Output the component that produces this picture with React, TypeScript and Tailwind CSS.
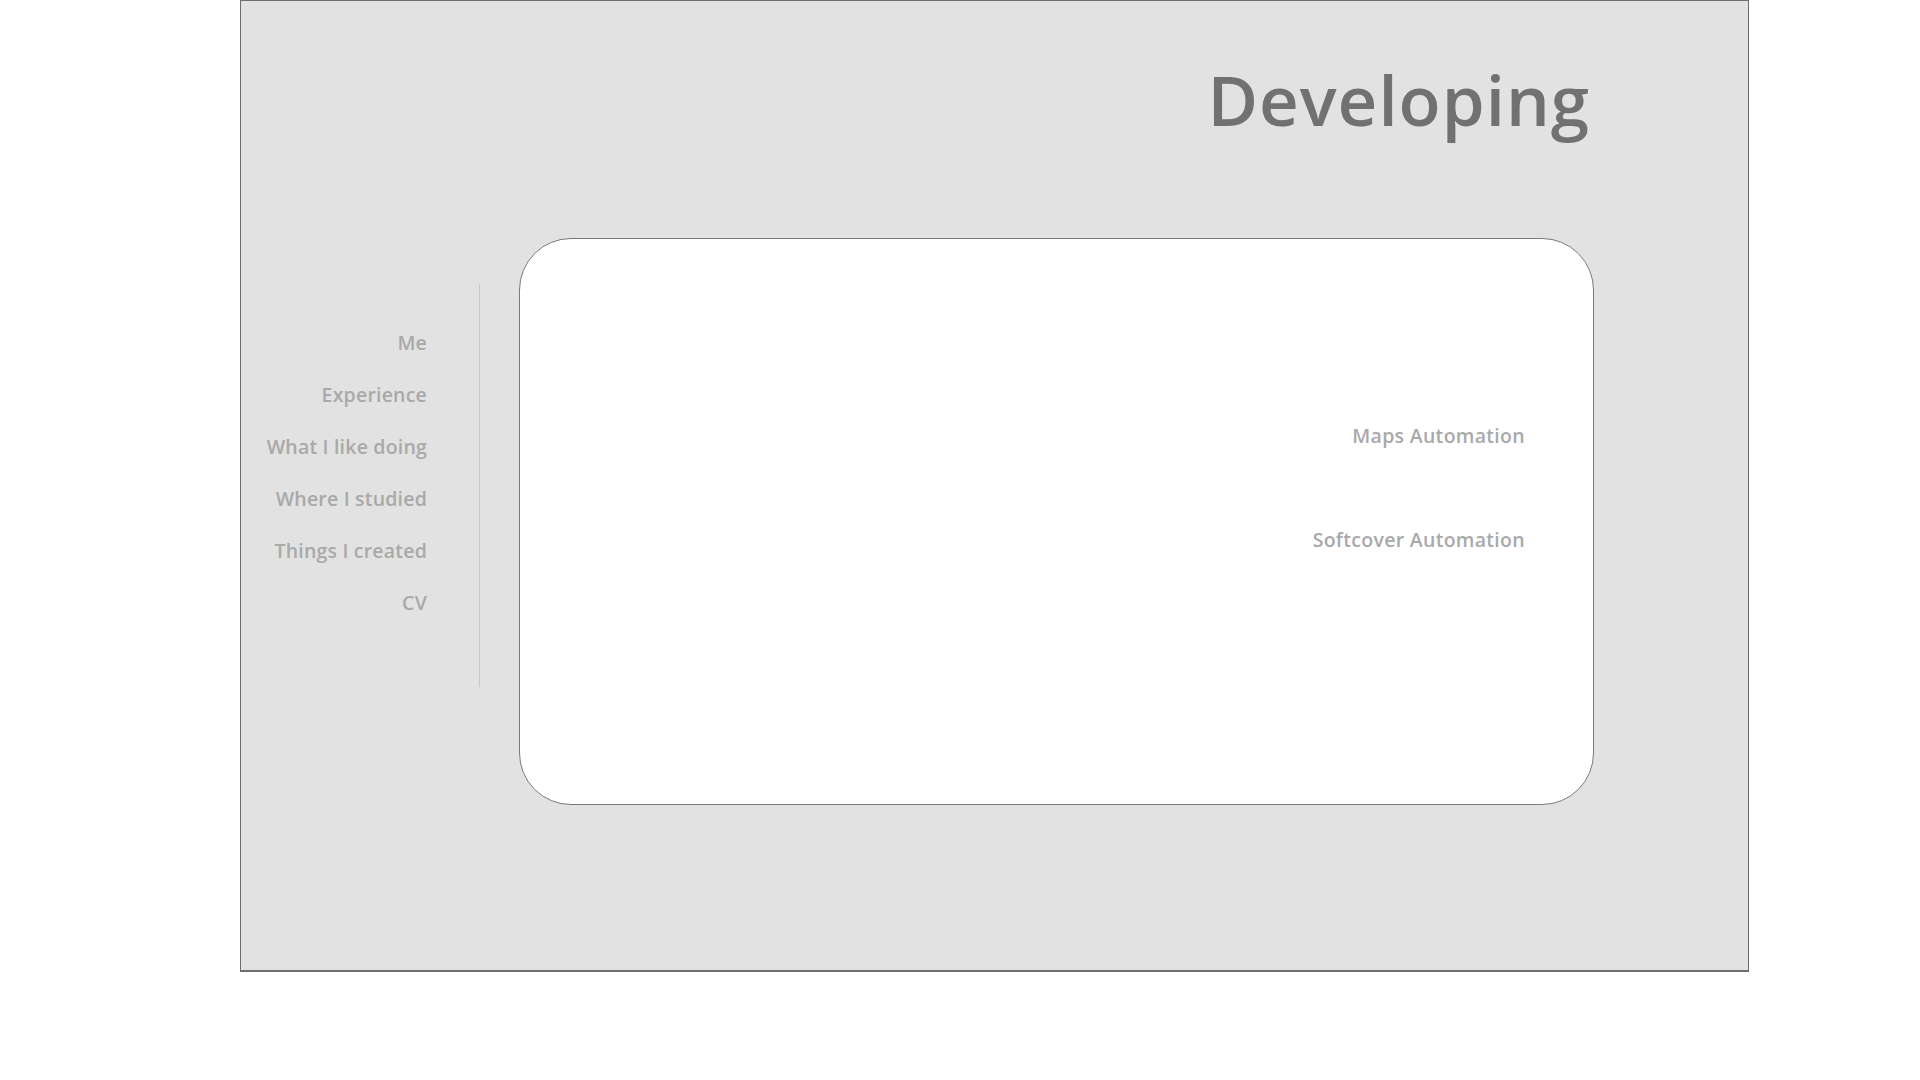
import React from "react";

const navItems = ["Me", "Experience", "What I like doing", "Where I studied", "Things I created", "CV"];

export default function App() {
  return (
    <div className="w-[1920px] h-[1080px] bg-white" style={{ fontFamily: "'Open Sans', 'Noto Sans', sans-serif" }}>
      <div className="ml-[240px] w-[1509px] h-[972px] border border-[#6e6e6e] border-b-2 bg-[#e2e2e2] flex flex-col">
        <div className="pt-[58px] pr-[158px] text-right">
          <h1 className="text-[69px] leading-[80px] font-semibold tracking-[1px] text-[#717171]">Developing</h1>
        </div>
        <div className="mt-[99px] flex items-start">
          <div className="mt-[46px] flex items-start">
            <nav className="w-[186px] pt-[33px] flex flex-col items-end text-[19.5px] font-semibold tracking-[0.2px] text-[#a9a9a9]">
              {navItems.map((t) => (
                <a key={t} className="h-[52px] leading-[52px] whitespace-nowrap">
                  {t}
                </a>
              ))}
            </nav>
            <div className="ml-[52px] w-px h-[403px] bg-[#c8c8c8]" />
          </div>
          <div className="ml-[39px] w-[1075px] h-[567px] rounded-[52px] border border-[#7a7a7a] bg-white flex flex-col items-end pr-[68px] pt-[171px] text-[19.5px] font-semibold tracking-[0.3px] text-[#a9a9a9]">
            <div className="h-[52px] leading-[52px]">Maps Automation</div>
            <div className="mt-[52px] h-[52px] leading-[52px]">Softcover Automation</div>
          </div>
        </div>
      </div>
    </div>
  );
}
